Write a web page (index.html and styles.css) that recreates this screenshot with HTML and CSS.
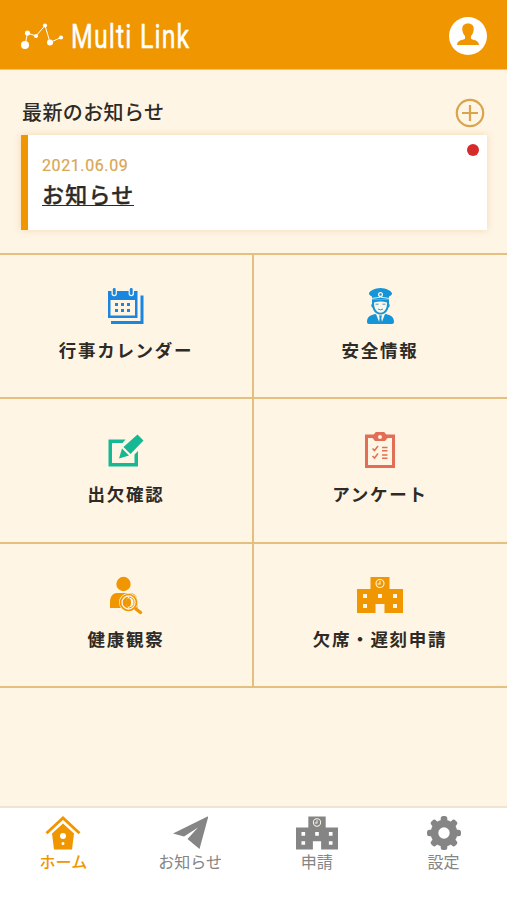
FILE: index.html
```html
<!DOCTYPE html>
<html lang="ja">
<head>
<meta charset="utf-8">
<title>Multi Link</title>
<link rel="stylesheet" href="styles.css">
</head>
<body>
<svg class="defs" aria-hidden="true">
  <symbol id="school" viewBox="0 0 46 36">
    <path fill-rule="evenodd" fill="currentColor" d="M13.500 0H32.500V12H46V36H27.500V27H18.500V36H0V12H13.500ZM6 17V21H10V17ZM6 27V31H10V27ZM21 17V21H25V17ZM36 17V21H40V17ZM36 27V31H40V27Z"/>
    <circle class="cut" cx="23" cy="6.500" r="4"/>
    <path class="cut" d="M23 4V7H20.500"/>
  </symbol>
</svg>
<div class="app">
  <header class="header">
    <div class="brand">
      <svg viewBox="0 0 44 40" width="44" height="40">
        <path class="logo-line" d="M4 30 6.500 18 15 21 24 10.500 29 27.500 40 22.500"/>
        <g fill="#fff"><circle cx="4" cy="30" r="4"/><circle cx="6.500" cy="18" r="2.600"/><circle cx="15" cy="21" r="2.100"/><circle cx="24" cy="10.500" r="2.100"/><circle cx="29" cy="27.500" r="3"/><circle cx="40" cy="22.500" r="2.100"/></g>
      </svg>
      <span class="logo-text">Multi Link</span>
    </div>
    <svg class="avatar" viewBox="0 0 38 38" width="38" height="38">
      <circle cx="19" cy="19" r="19" fill="#fff"/>
      <path fill="#f09600" d="M19 6.500c-4 0-6 2.300-5.700 6 .2 2.900 1.200 5.200 2.700 6.500v2.700c-2.200 1.500-8 1.300-8 6.300h22c0-5-5.800-4.800-8-6.300V19c1.500-1.300 2.500-3.600 2.700-6.500.3-3.700-1.700-6-5.700-6Z"/>
    </svg>
  </header>

  <section class="news">
    <div class="news-head">
      <h1>最新のお知らせ</h1>
      <svg viewBox="0 0 30 30" width="30" height="30" fill="none" stroke="#d9a44b" stroke-width="2.200"><circle cx="15" cy="15" r="13.200"/><path d="M15 7V23M7 15H23"/></svg>
    </div>
    <article class="card">
      <time>2021.06.09</time>
      <a>お知らせ</a>
      <i class="dot"></i>
    </article>
  </section>

  <main class="menu">
    <div class="cell">
      <svg viewBox="0 0 36 36" width="36" height="36" fill="#1b86e0">
        <path fill-rule="evenodd" d="M0 3H3.500V5.500a2.700 2.700 0 0 0 5.400 0V3H20.600V5.500a2.700 2.700 0 0 0 5.400 0V3H29.500V30H0ZM2.500 12V27.500H27V12Z"/>
        <rect x="4.800" y="0" width="2.900" height="7" rx="1.400"/><rect x="21.800" y="0" width="2.900" height="7" rx="1.400"/>
        <path d="M32.500 7.500H35.500V36H3V33H32.500Z"/>
        <path d="M7 15h3v3H7zM13 15h3v3h-3zM19 15h3v3h-3zM7 21h3v3H7zM13 21h3v3h-3zM19 21h3v3h-3z"/>
      </svg>
      <span>行事カレンダー</span>
    </div>
    <div class="cell">
      <svg viewBox="0 0 27 36" width="27" height="36" fill="#1495d8">
        <path d="M13.500 0C8 .2 3 2.500 2 5.200c-.4 1.600 1.800 2.500 3 3.300V11.500h17V8.500c1.200-.8 3.400-1.700 3-3.300C24 2.500 19 .2 13.500 0Z"/>
        <path d="M5 11.500H22V16c1 0 1 3-.5 3.500C20.500 24 17 26.500 13.500 26.500S6.500 24 5.500 19.500C4 19 4 16 5 16Z"/>
        <path fill="#fff5e5" d="M7 14.500c4-1.500 9-1.500 13 0 .3 5.500-2.500 10.300-6.500 10.300S6.700 20 7 14.500Z"/>
        <path fill="none" stroke="#fff5e5" stroke-width=".9" d="M5 10.400Q13.500 8 22 10.400"/>
        <circle cx="13.500" cy="6.500" r="1.900" fill="none" stroke="#fff5e5" stroke-width="1.300"/>
        <path fill="none" stroke="#1495d8" stroke-width=".9" d="M8.500 16.200h3M15.500 16.200h3M11 21q2.500 1.800 5 0"/>
        <path d="M8 26C4 27.500 0 28 0 34c0 1 .8 2 2 2H25c1.200 0 2-1 2-2 0-6-4-6.500-8-8l-5.500 2Z"/>
        <path fill="#fff5e5" d="M9 26 13.500 27.500 18 26 14.500 35H12.500Z"/><path d="M12 27.500h3l-.7 2.500 1 6h-3.600l1-6Z"/>
      </svg>
      <span>安全情報</span>
    </div>
    <div class="cell">
      <svg viewBox="0 0 36 36" width="36" height="36" fill="#14b993">
        <path d="M.5 7.500H17.500L14.500 11H4V31H26.500V22.500L30 19V34.500H.5Z"/>
        <path d="M29.500 2.500 35.500 8.500 22.500 22 15.500 15ZM14 16.500 21 23.500 11 26.500Z"/>
      </svg>
      <span>出欠確認</span>
    </div>
    <div class="cell">
      <svg viewBox="0 0 30 36" width="30" height="36" fill="#e26f55">
        <path fill-rule="evenodd" d="M0 2.500H8C10 2.500 9.500 0 11.500 0H18.500C20.500 0 20 2.500 22 2.500H30V36H0ZM3 6V33H27V6H22.500L20 9H10L7.500 6ZM15 3A2 2 0 1 0 15 7 2 2 0 1 0 15 3Z"/>
        <path fill="none" stroke="#e26f55" stroke-width="1.500" d="M7.500 16.500 9.500 18.500 13 14M7.500 24 9.500 26 13 21.500M17 15.500h5.500M17 18.700h5.500M17 23h5.500M17 26.200h5.500"/>
      </svg>
      <span>アンケート</span>
    </div>
    <div class="cell">
      <svg viewBox="0 0 36 36" width="36" height="36" fill="#f09600">
        <circle cx="15.500" cy="7" r="7.200"/>
        <path d="M9 16H22c5 0 7.500 4 7.500 9V31H2V25c0-5 2.500-9 7-9Z"/>
        <circle cx="20.500" cy="25.500" r="9.500" fill="#fff5e5"/>
        <path stroke="#f09600" stroke-width="3.400" stroke-linecap="round" d="M28 32 32.500 35.500"/>
        <circle cx="20.500" cy="25.500" r="8" fill="none" stroke="#f09600" stroke-width="1.700"/>
        <path d="M20.500 19.700a5.800 5.800 0 0 0 0 11.600q-5-5.800 0-11.600Z"/><ellipse cx="20.500" cy="25.500" rx="2.500" ry="4.200"/><path fill="none" stroke="#f09600" d="M21 20q5 1 5 5.500t-5 5.500"/>
      </svg>
      <span>健康観察</span>
    </div>
    <div class="cell">
      <svg class="school" width="46" height="36"><use href="#school"/></svg>
      <span>欠席・遅刻申請</span>
    </div>
  </main>

  <nav class="tabs">
    <a class="tab active">
      <svg viewBox="0 0 36 34" width="36" height="34"><path fill="none" stroke="currentColor" stroke-width="2.800" d="M1.500 17.300 18 2 34.500 17.300"/><path fill="currentColor" fill-rule="evenodd" d="M18 7.500 29 17.500 27 33.500H9L7 17.500ZM18 17a3 3 0 1 0 0 6 3 3 0 1 0 0-6ZM18 26a1.500 1.500 0 1 0 0 3 1.500 1.500 0 1 0 0-3Z"/></svg>
      <span>ホーム</span>
    </a>
    <a class="tab">
      <svg viewBox="0 0 36 34" width="36" height="34"><path fill="currentColor" d="M36.500 0 27.500 33 15.500 23 26 11.500 12 20.500 1 17.500Z"/></svg>
      <span>お知らせ</span>
    </a>
    <a class="tab">
      <svg class="school-tab" width="42" height="34"><use href="#school"/></svg>
      <span>申請</span>
    </a>
    <a class="tab">
      <svg viewBox="-17 -17 34 34" width="34" height="34" fill="currentColor">
        <g id="teeth"><rect x="-3.300" y="-17" width="6.600" height="34" rx="2.500"/><rect x="-17" y="-3.300" width="34" height="6.600" rx="2.500"/></g>
        <use href="#teeth" transform="rotate(45)"/>
        <circle r="13.300"/><circle r="5.700" fill="#fff"/>
      </svg>
      <span>設定</span>
    </a>
  </nav>
</div>
</body>
</html>
```
FILE: styles.css
```css
* { box-sizing: border-box; }
body {
  margin: 0;
  background: #fff5e5;
  color: #2e2b26;
  font-family: "Noto Sans CJK JP", sans-serif;
}
svg { display: block; flex: none; }
.defs { position: absolute; width: 0; height: 0; }
.app { height: 900px; display: flex; flex-direction: column; overflow: hidden; }

.header {
  height: 70px;
  flex: none;
  display: flex;
  justify-content: space-between;
  padding: 15px 20px 0 21px;
  background: #f09600;
  border-bottom: 1px solid #f6c36e;
}
.brand { display: flex; }
.avatar { margin-top: 2px; }
.logo-line { fill: none; stroke: #fff; stroke-width: 1; }
.logo-text {
  margin: 1px 0 0 6px;
  font: 400 34px/40px Roboto, sans-serif;
  letter-spacing: 1.6px;
  white-space: nowrap;
  color: #fff;
  -webkit-text-stroke: .5px #fff;
  transform: scaleX(.732);
  transform-origin: 0 50%;
}

.news { height: 183px; flex: none; padding: 28px 20px 0 21px; }
.news-head { display: flex; justify-content: space-between; height: 37px; padding-right: 2px; }
.news-head h1 { margin: 0 0 0 1px; font-size: 20px; line-height: 28px; font-weight: 500; letter-spacing: .4px; }
.card {
  position: relative;
  height: 95px;
  padding: 20px 0 0 14px;
  border-left: 7px solid #f09600;
  background: #fff;
  box-shadow: 0 0 7px rgba(190, 130, 30, .25);
}
.card time { display: block; font: 400 16px/22px Roboto, sans-serif; letter-spacing: .6px; color: #d9a654; -webkit-text-stroke: .2px #d9a654; }
.card a { display: inline-block; height: 29px; border-bottom: 1px solid #2e2b26; font-size: 22px; line-height: 33px; font-weight: 500; letter-spacing: 1.2px; -webkit-text-stroke: .3px #2e2b26; }
.dot { position: absolute; top: 9px; right: 8px; width: 12px; height: 12px; border-radius: 50%; background: #d52b2b; }

.menu { flex: none; display: grid; grid-template-columns: 254px 1fr; grid-template-rows: repeat(3, 144.4px); border-top: 2px solid #e3c081; }
.cell {
  display: flex;
  flex-direction: column;
  align-items: center;
  padding-top: 33px;
  border-bottom: 2px solid #e3c081;
}
.cell:nth-child(odd) { border-right: 2px solid #e3c081; }
.cell:nth-child(even) { padding-right: 1px; }
.cell svg { height: 36px; overflow: visible; }
.cell span { margin-top: 12px; font-size: 17.5px; line-height: 28px; font-weight: 700; letter-spacing: 1.7px; }
.school { color: #f09600; }
.cut { fill: none; stroke: #fff5e5; stroke-width: 1.1; }

.tabs {
  height: 94px;
  flex: none;
  margin-top: auto;
  display: grid;
  grid-template-columns: repeat(4, 1fr);
  padding-top: 8px;
  border-top: 2px solid #f0e5d5;
  background: #fff;
}
.tab { display: flex; flex-direction: column; align-items: center; color: #858585; }
.tab span { margin-top: -2px; font-size: 16px; line-height: 26px; }
.active { color: #f09600; }
.active span { font-weight: 500; }
```
